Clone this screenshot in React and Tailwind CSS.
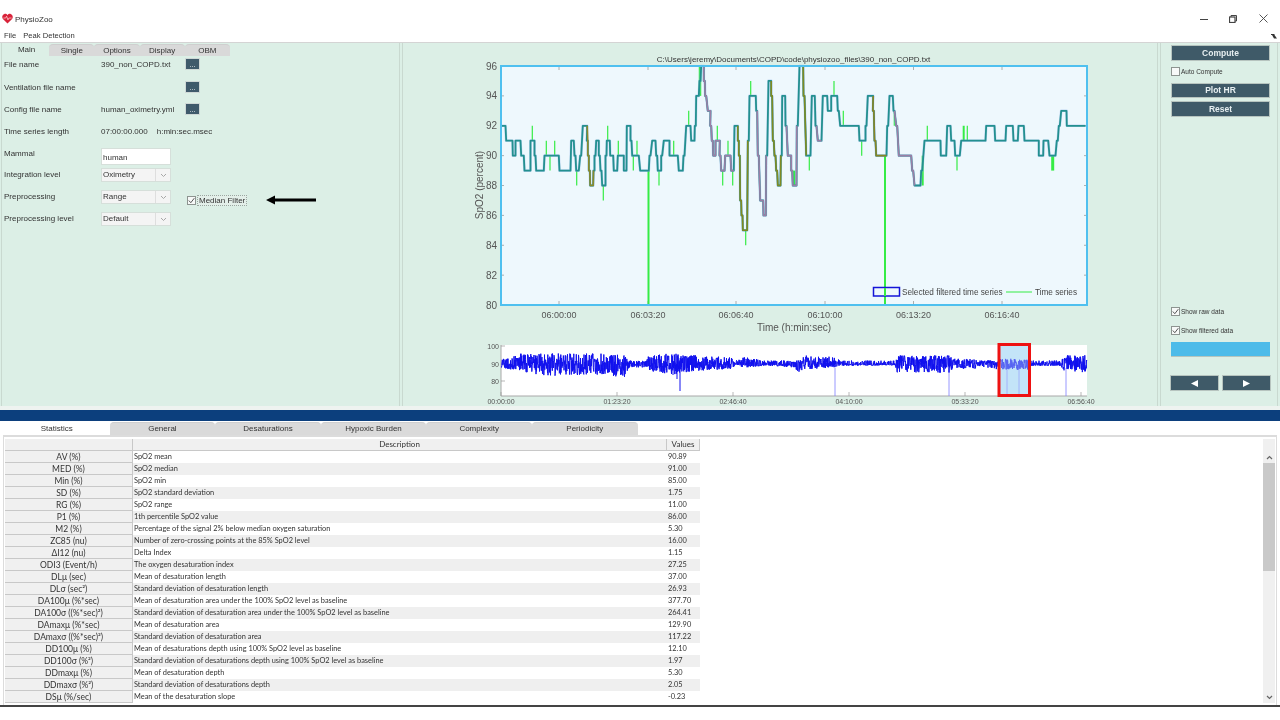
const sans = "font-['Liberation_Sans',Arial,sans-serif]";

const topTabs = ['Main', 'Single', 'Options', 'Display', 'OBM'];
const bottomTabs = ['Statistics', 'General', 'Desaturations', 'Hypoxic Burden', 'Complexity', 'Periodicity'];

const stats = [
  ['AV (%)', 'SpO2 mean', '90.89'],
  ['MED (%)', 'SpO2 median', '91.00'],
  ['Min (%)', 'SpO2 min', '85.00'],
  ['SD (%)', 'SpO2 standard deviation', '1.75'],
  ['RG (%)', 'SpO2 range', '11.00'],
  ['P1 (%)', '1th percentile SpO2 value', '86.00'],
  ['M2 (%)', 'Percentage of the signal 2% below median oxygen saturation', '5.30'],
  ['ZC85 (nu)', 'Number of zero-crossing points at the 85% SpO2 level', '16.00'],
  ['ΔI12 (nu)', 'Delta Index', '1.15'],
  ['ODI3 (Event/h)', 'The oxygen desaturation index', '27.25'],
  ['DLμ (sec)', 'Mean of desaturation length', '37.00'],
  ['DLσ (sec²)', 'Standard deviation of desaturation length', '26.93'],
  ['DA100μ (%*sec)', 'Mean of desaturation area under the 100% SpO2 level as baseline', '377.70'],
  ['DA100σ ((%*sec)²)', 'Standard deviation of desaturation area under the 100% SpO2 level as baseline', '264.41'],
  ['DAmaxμ (%*sec)', 'Mean of desaturation area', '129.90'],
  ['DAmaxσ ((%*sec)²)', 'Standard deviation of desaturation area', '117.22'],
  ['DD100μ (%)', 'Mean of desaturations depth using 100% SpO2 level as baseline', '12.10'],
  ['DD100σ (%²)', 'Standard deviation of desaturations depth using 100% SpO2 level as baseline', '1.97'],
  ['DDmaxμ (%)', 'Mean of desaturation depth', '5.30'],
  ['DDmaxσ (%²)', 'Standard deviation of desaturations depth', '2.05'],
  ['DSμ (%/sec)', 'Mean of the desaturation slope', '-0.23'],
];

// plateaus traced off the plot: [from, to, value], x in crop coordinates
const leftPart = [
  [95, 105, 92], [110, 126, 91], [130, 135, 90], [138, 150, 91], [155, 160, 90], [165, 180, 89], [183, 192, 91],
  [195, 195, 90], [200, 220, 89], [225, 265, 90], [270, 300, 89], [305, 310, 91], [315, 315, 90], [320, 325, 89],
  [332, 332, 90], [340, 350, 92], [352, 352, 91], [355, 355, 90], [358, 358, 89], [362, 368, 88], [372, 372, 89],
  [375, 375, 90], [380, 385, 91], [388, 388, 90], [393, 393, 89], [398, 405, 88], [408, 408, 90], [412, 418, 91],
  [422, 428, 90], [433, 440, 89], [445, 460, 90], [463, 468, 89], [472, 480, 92], [483, 483, 91], [488, 505, 90],
  [512, 535, 89], [540, 540, 90], [548, 555, 91], [560, 560, 90], [565, 572, 89], [575, 575, 90], [583, 597, 91],
  [600, 622, 90], [628, 637, 89], [642, 642, 90], [650, 660, 92], [665, 672, 91], [676, 676, 92], [680, 685, 94],
  [690, 690, 95], [695, 700, 96], [703, 703, 95], [707, 707, 94], [715, 720, 93], [722, 722, 92], [727, 727, 91],
  [731, 735, 90], [738, 748, 91], [750, 750, 90], [755, 762, 89], [767, 780, 90], [785, 790, 89], [795, 802, 92],
  [805, 805, 91], [808, 808, 90], [812, 812, 87], [816, 816, 86], [820, 830, 85], [835, 835, 91], [840, 856, 94],
  [860, 860, 93], [865, 865, 90], [872, 878, 87], [882, 886, 86], [890, 890, 90], [897, 902, 95], [905, 905, 94],
  [910, 910, 91], [915, 915, 90], [920, 920, 89], [925, 930, 88], [934, 934, 90],
];
const rightPart = [
  [8, 14, 94], [18, 18, 92], [25, 32, 90], [35, 35, 89], [40, 48, 88], [52, 52, 92], [60, 68, 96], [72, 72, 94],
  [80, 90, 90], [97, 103, 94], [108, 108, 92], [115, 123, 91], [130, 140, 94], [145, 152, 93], [155, 170, 94],
  [175, 175, 93], [182, 235, 92], [240, 255, 91], [258, 258, 92], [265, 278, 94], [280, 280, 93], [285, 285, 91],
  [290, 318, 90], [323, 323, 92], [330, 337, 94], [342, 342, 93], [350, 350, 92], [358, 392, 90], [398, 398, 89],
  [405, 420, 88], [425, 425, 89], [435, 480, 91], [484, 497, 90], [503, 510, 92], [515, 522, 91], [527, 538, 90],
  [545, 615, 91], [620, 642, 92], [647, 675, 91], [680, 697, 92], [702, 712, 91], [717, 730, 92], [735, 775, 91],
  [778, 788, 90], [792, 803, 91], [810, 825, 90], [832, 832, 91], [838, 838, 92], [845, 858, 93], [862, 915, 92],
];

const valueY = (v) => 66 + (96 - v) * 14.94;

const series = [];
leftPart.forEach(([a, b, v]) => {
  series.push([470 + (a - 1.5) / 3, valueY(v)]);
  series.push([470 + (b + 1.5) / 3, valueY(v)]);
});
rightPart.forEach(([a, b, v]) => {
  series.push([780 + (a - 1.5) / 3, valueY(v)]);
  series.push([780 + (b + 1.5) / 3, valueY(v)]);
});

const toPoints = (pts) => pts.map(([x, y]) => `${x.toFixed(1)},${y.toFixed(1)}`).join(' ');

// stretches where the filtered trace changes tint
const tinted = [
  [587, 594, '#8c8a2c'], [703, 734, '#9a7fa6'], [737, 748, '#7f8a22'], [757, 767, '#9a7fa6'], [769, 781, '#7f8a22'],
  [786, 797, '#9a7fa6'], [800, 810, '#7f8a22'], [816, 822, '#9a7fa6'], [868, 887, '#8a8424'], [894, 920, '#9a7fa6'],
];

// raw series spikes: [x, value from, value to, width]
const spikes = [
  [532.3, 91, 92], [546.3, 90, 91], [550, 90, 89], [554.7, 90, 91], [576.7, 89, 88], [603.3, 88, 87], [607.7, 91, 92],
  [618.3, 90, 91], [633.3, 90, 89], [637, 90, 91], [659, 89, 88], [673.7, 90, 91], [688.7, 92, 93], [700, 96, 94, 2.5],
  [717.3, 91, 92], [722.7, 89, 88], [728, 90, 91], [732.7, 89, 88], [745.7, 85, 84], [750.7, 94, 95],
  [794, 88, 89, 2.5], [809.3, 90, 89], [834, 94, 95], [843.3, 92, 93], [861.7, 91, 90], [894.3, 93, 92],
  [922.7, 88, 90, 2], [927.3, 91, 92], [957, 90, 89], [963.7, 91, 92, 2], [967.3, 91, 92], [1052.7, 90, 89, 3],
];

const plotYTicks = [96, 94, 92, 90, 88, 86, 84, 82, 80];
const plotXTicks = [[559, '06:00:00'], [648, '06:03:20'], [736, '06:06:40'], [825, '06:10:00'], [913.5, '06:13:20'], [1002, '06:16:40']];
const miniXTicks = [[501, '00:00:00'], [617, '01:23:20'], [733, '02:46:40'], [849, '04:10:00'], [965, '05:33:20'], [1081, '06:56:40']];

// envelope of the overview trace: [x, up, down]
const envelope = [
  [501, 3, 2], [520, 6, 4], [547, 6, 7], [600, 6, 6], [625, 5, 8], [630, 2, 2], [645, 2, 2], [650, 6, 4], [672, 6, 6],
  [695, 5, 4], [730, 4, 3], [735, 2, 1], [745, 4, 2], [765, 2, 1], [792, 2, 2], [798, 2, 5], [805, 5, 3], [835, 4, 2],
  [840, 2, 1], [895, 2, 1], [897, 5, 5], [950, 5, 5], [952, 3, 3], [975, 3, 3], [977, 2, 1], [996, 2, 3], [1000, 3, 4],
  [1030, 3, 3], [1032, 2, 1], [1060, 2, 1], [1066, 5, 5], [1087, 5, 5],
];

const miniY = (v) => 364 - (v - 90) * 1.75;

function buildOverview() {
  let seed = 390;
  const rand = () => {
    seed = (seed * 16807) % 2147483647;
    return seed / 2147483647;
  };
  const pts = [];
  let seg = 0;
  for (let x = 501.5; x < 1087; x += 0.25) {
    while (seg < envelope.length - 2 && envelope[seg + 1][0] < x) seg++;
    const [x0, u0, d0] = envelope[seg];
    const [x1, u1, d1] = envelope[seg + 1];
    const t = (x - x0) / (x1 - x0);
    const up = u0 + (u1 - u0) * t;
    const down = d0 + (d1 - d0) * t;
    const r = rand();
    const v = r > 0.5 ? 90 + up * (r - 0.5) * 2 : 90 - down * (0.5 - r) * 2;
    pts.push([x, miniY(v)]);
  }
  return pts;
}

const overview = buildOverview();

function HeartIcon() {
  return (
    <svg width="11" height="11" viewBox="0 0 12 12" className="mb-[1px] shrink-0">
      <path d="M6 11.5 1 6.5C-.4 4.8.2 1.6 2.6 1 4 .7 5.3 1.3 6 2.4 6.7 1.3 8 .7 9.4 1c2.4.6 3 3.8 1.6 5.5Z" fill="#d9233a" />
      <path d="M1.5 5.5h2.5l1-2 1.500 4 1-2h3" fill="none" stroke="#ffd5d5" strokeWidth="0.8" />
    </svg>
  );
}

function WindowButtons() {
  return (
    <div className="mb-[2px] ml-auto flex items-center text-[#333]">
      <svg width="8" height="8" viewBox="0 0 8 8" className="-ml-[1px]"><path d="M0 4.5h8" stroke="#444" strokeWidth="1" /></svg>
      <svg width="8" height="8" viewBox="0 0 8 8" className="ml-[21px]">
        <path d="M2 2V.5h5.5V6H6" fill="none" stroke="#444" strokeWidth="1" />
        <rect x=".5" y="2" width="5.5" height="5.5" fill="none" stroke="#444" strokeWidth="1.2" />
      </svg>
      <svg width="9" height="9" viewBox="0 0 9 9" className="ml-[22px] mr-[12px]"><path d="M.5.5l8 8M8.5.5l-8 8" stroke="#444" strokeWidth="0.9" /></svg>
    </div>
  );
}

function DotsButton() {
  return (
    <button className="ml-[84px] mt-[2px] flex h-[12px] w-[15px] shrink-0 items-end justify-center border border-[#cfd8d6] bg-[#3f5a6b] pb-[1px] text-[7px] leading-[7px] text-white">
      ...
    </button>
  );
}

function Chevron() {
  return (
    <svg width="7" height="5" viewBox="0 0 7 5"><path d="M1 1l2.5 2.5L6 1" fill="none" stroke="#a8a8a8" strokeWidth="1" /></svg>
  );
}

function Dropdown({ value }) {
  return (
    <div className="mt-[2px] flex h-[14px] w-[70px] shrink-0 items-center border border-[#d6dfda] bg-[#f4f4f4] pl-[1px]">
      <span>{value}</span>
      <span className="ml-auto flex h-full w-[15px] items-center justify-center border-l border-[#dedede]">
        <Chevron />
      </span>
    </div>
  );
}

function Check({ checked }) {
  return (
    <span className="flex h-[9px] w-[9px] shrink-0 items-center justify-center border border-[#8d9490] bg-[#f7f9f8]">
      {checked && (
        <svg width="7" height="7" viewBox="0 0 7 7"><path d="M.8 3.5 2.8 5.7 6.3 1.2" fill="none" stroke="#444" strokeWidth="0.9" /></svg>
      )}
    </span>
  );
}

function FormRow({ label, children, className = '' }) {
  return (
    <div className={`flex ${className}`}>
      <span className="h-[15px] w-[99px] shrink-0 whitespace-nowrap pl-[2px] leading-[18px]">{label}</span>
      {children}
    </div>
  );
}

function DarkButton({ children, className = '' }) {
  return (
    <button className={`flex w-[99px] items-center justify-center border border-[#b7c4bf] bg-[#3f5a68] text-[8.5px] font-bold text-[#e6eef0] ${className}`}>
      {children}
    </button>
  );
}

function LeftPanel() {
  return (
    <div className="ml-[1px] h-full w-[399px] border-x border-[#c9d9d0] text-[8px] text-[#333]">
      <div className="flex h-[13px] items-end pl-[2px]">
        {topTabs.map((t, i) => (
          <div
            key={t}
            className={`flex h-[12px] w-[45.2px] items-center justify-center rounded-t-[4px] ${i === 0 ? 'bg-[#dcefe6]' : 'border-t border-[#cfcfcf] bg-[#d9d9d9]'}`}
          >
            {t}
          </div>
        ))}
      </div>
      <FormRow label="File name" className="h-[14px]">
        <span className="w-[0px] whitespace-nowrap leading-[18px]">390_non_COPD.txt</span>
        <DotsButton />
      </FormRow>
      <FormRow label="Ventilation file name" className="mt-[9px] h-[14px]">
        <span className="w-[0px]" />
        <DotsButton />
      </FormRow>
      <FormRow label="Config file name" className="mt-[8px] h-[14px]">
        <span className="w-[0px] whitespace-nowrap leading-[18px]">human_oximetry.yml</span>
        <DotsButton />
      </FormRow>
      <FormRow label="Time series length" className="mt-[8px] h-[14px]">
        <span className="whitespace-nowrap leading-[18px]">07:00:00.000</span>
        <span className="ml-[9px] whitespace-nowrap leading-[18px]">h:min:sec.msec</span>
      </FormRow>
      <FormRow label="Mammal" className="mt-[8px] h-[21px]">
        <div className="mt-[3px] flex h-[17px] w-[70px] items-center border border-[#d6dfda] bg-white pl-[1px] pt-[2px]">human</div>
      </FormRow>
      <FormRow label="Integration level" className="h-[22px]">
        <Dropdown value="Oximetry" />
      </FormRow>
      <FormRow label="Preprocessing" className="h-[22px]">
        <Dropdown value="Range" />
        <div className="ml-[16px] mt-[7px] flex h-[10px] items-center">
          <Check checked />
          <span className="ml-[1px] border border-dotted border-[#9aa7a0] bg-[#e3efe9] px-[1px] leading-[9px]">Median Filter</span>
          <svg width="50" height="10" viewBox="0 0 50 10" className="ml-[19px]">
            <path d="M0 5 9 .5V3.5H50V6.5H9V9.5Z" fill="#000" />
          </svg>
        </div>
      </FormRow>
      <FormRow label="Preprocessing level" className="h-[22px]">
        <Dropdown value="Default" />
      </FormRow>
    </div>
  );
}

function MainPlot() {
  return (
    <svg width="754" height="273" viewBox="403 65 754 273" className={`block overflow-visible ${sans}`}>
      <rect x="501" y="66" width="586" height="239" fill="#eef8fd" />
      {plotYTicks.map((v) => (
        <g key={v}>
          <path d={`M501 ${valueY(v)}h3M1087 ${valueY(v)}h-3`} stroke="#999" strokeWidth="0.8" />
          <text x="497" y={valueY(v) + 3.5} textAnchor="end" fontSize="10" fill="#555">{v}</text>
        </g>
      ))}
      {plotXTicks.map(([x, label]) => (
        <g key={label}>
          <path d={`M${x} 66v4M${x} 305v-4`} stroke="#999" strokeWidth="0.8" />
          <text x={x} y="318" textAnchor="middle" fontSize="9" fill="#555">{label}</text>
        </g>
      ))}
      <text transform="translate(483 185) rotate(-90)" textAnchor="middle" fontSize="10" fill="#555">SpO2 (percent)</text>
      <text x="794" y="331" textAnchor="middle" fontSize="10" fill="#555">Time (h:min:sec)</text>

      <path d="M648.5 171V305" stroke="#35ec45" strokeWidth="2" />
      <path d="M885 156V305" stroke="#35ec45" strokeWidth="2" />
      {spikes.map(([x, a, b, w], i) => (
        <path key={i} d={`M${x} ${valueY(a)}V${valueY(b)}`} stroke="#35ec45" strokeWidth={w || 1.2} />
      ))}
      <polyline points={toPoints(series)} fill="none" stroke="#8fb6ea" strokeWidth="2.6" strokeOpacity="0.5" strokeLinejoin="round" />
      <polyline points={toPoints(series)} fill="none" stroke="#23908f" strokeWidth="1.8" strokeLinejoin="round" />
      {tinted.map(([a, b, color]) => (
        <polyline key={a} points={toPoints(series.filter(([x]) => x >= a && x <= b))} fill="none" stroke={color} strokeWidth="1.6" strokeLinejoin="round" />
      ))}
      <rect x="501" y="66" width="586" height="239" fill="none" stroke="#4fc0ef" strokeWidth="2" />

      <rect x="873.5" y="287.5" width="26" height="8.5" fill="#eef8fd" stroke="#1414d8" strokeWidth="1.5" />
      <path d="M885 288v8" stroke="#35ec45" strokeWidth="2" />
      <text x="902" y="295" fontSize="8.2" fill="#444">Selected filtered time series</text>
      <path d="M1006 292h26" stroke="#35ec45" strokeWidth="1" />
      <text x="1035" y="295" fontSize="8.2" fill="#444">Time series</text>
    </svg>
  );
}

function OverviewPlot() {
  return (
    <svg width="754" height="68" viewBox="403 338 754 68" className={`block overflow-visible ${sans}`}>
      <rect x="501" y="345" width="586" height="51" fill="#fff" />
      <rect x="998" y="345" width="32" height="51" fill="#c4e4f8" />
      <path d="M501 345V396H1087" fill="none" stroke="#a8a8a8" strokeWidth="1" />
      {[[100, 346], [90, 364], [80, 381]].map(([v, y]) => (
        <g key={v}>
          <path d={`M501 ${y}h4`} stroke="#999" strokeWidth="0.7" />
          <text x="499" y={y + 2.5} textAnchor="end" fontSize="7" fill="#555">{v}</text>
        </g>
      ))}
      {miniXTicks.map(([x, label]) => (
        <g key={label}>
          <path d={`M${x} 396v-4`} stroke="#999" strokeWidth="0.7" />
          <text x={x} y="404" textAnchor="middle" fontSize="7" fill="#555">{label}</text>
        </g>
      ))}
      {[835, 949, 1007, 1019, 1066].map((x) => (
        <path key={x} d={`M${x} 368V396`} stroke="#7f7fff" strokeWidth="0.8" />
      ))}
      <polyline points={toPoints(overview)} fill="none" stroke="#1010ee" strokeWidth="1" />
      <path d="M680 364V391M677 364V379M673 362V375" stroke="#1010ee" strokeWidth="1" />
      <rect x="998" y="345" width="32" height="51" fill="#c4e4f8" fillOpacity="0.4" />
      <rect x="999" y="344.5" width="30.5" height="51" fill="none" stroke="#ee1111" strokeWidth="3" />
    </svg>
  );
}

function CenterPanel() {
  return (
    <div className="ml-[2px] h-full w-[756px] border-x border-[#c9d9d0] pt-[12px]">
      <div className="h-[10px] whitespace-nowrap pl-[27px] text-center text-[8px] leading-[10px] text-[#333]">
        C:\Users\jeremy\Documents\COPD\code\physiozoo_files\390_non_COPD.txt
      </div>
      <MainPlot />
      <OverviewPlot />
    </div>
  );
}

function RightPanel() {
  return (
    <div className="ml-[2px] h-full w-[118px] border-x border-[#c9d9d0] pl-[10px] pt-[2px] text-[#333]">
      <DarkButton className="h-[16px]">Compute</DarkButton>
      <label className="mt-[6px] flex h-[9px] items-center text-[6.5px]">
        <Check />
        <span className="ml-[1px]">Auto Compute</span>
      </label>
      <DarkButton className="mt-[7px] h-[15px]">Plot HR</DarkButton>
      <DarkButton className="mt-[3px] h-[16px]">Reset</DarkButton>
      <label className="mt-[190px] flex h-[9px] items-center text-[6.5px]">
        <Check checked />
        <span className="ml-[1px]">Show raw data</span>
      </label>
      <label className="mt-[10px] flex h-[9px] items-center text-[6.5px]">
        <Check checked />
        <span className="ml-[1px]">Show filtered data</span>
      </label>
      <div className="mt-[7px] h-[15px] w-[99px] border-b border-[#b5c5be] bg-[#4dbbe9]" />
      <div className="-ml-[1px] mt-[18px] flex gap-[3px]">
        <button className="flex h-[16px] w-[49px] items-center justify-center border border-[#b7c4bf] bg-[#3f5a68]">
          <svg width="7" height="7" viewBox="0 0 7 7"><path d="M7 0v7L0 3.5Z" fill="#fff" /></svg>
        </button>
        <button className="flex h-[16px] w-[49px] items-center justify-center border border-[#b7c4bf] bg-[#3f5a68]">
          <svg width="7" height="7" viewBox="0 0 7 7"><path d="M0 0v7l7-3.5Z" fill="#fff" /></svg>
        </button>
      </div>
    </div>
  );
}

function StatsTable() {
  return (
    <div className="w-[695px] font-['Lato',sans-serif] text-[7.4px] text-[#333]">
      <div className="flex h-[12px] bg-[#f0f0f0]">
        <div className="w-[128px] border-b border-r border-[#c8c8c8]" />
        <div className="w-[534px] border-b border-r border-[#c8c8c8] text-center text-[8px] leading-[11px]">Description</div>
        <div className="w-[33px] border-b border-r border-[#c8c8c8] text-center text-[8px] leading-[11px]">Values</div>
      </div>
      {stats.map(([name, desc, value], i) => (
        <div key={name} className={`flex h-[12px] leading-[11px] ${i % 2 === 0 ? 'bg-white' : 'bg-[#efefef]'}`}>
          <div className="w-[128px] border-b border-r border-[#c8c8c8] bg-[#f0f0f0] text-center text-[8.5px] leading-[12px]">{name}</div>
          <div className="w-[534px] whitespace-nowrap pl-[1px]">{desc}</div>
          <div className="w-[33px] pl-[1px]">{value}</div>
        </div>
      ))}
    </div>
  );
}

function Scrollbar() {
  return (
    <div className="flex h-[264px] w-[12px] flex-col bg-[#f0f0f0]">
      <div className="flex h-[24px] items-end justify-center pb-[3px]">
        <svg width="7" height="5" viewBox="0 0 7 5"><path d="M1 4l2.5-2.5L6 4" fill="none" stroke="#666" strokeWidth="1.2" /></svg>
      </div>
      <div className="h-[108px] bg-[#c9c9c9]" />
      <div className="mt-auto flex h-[12px] items-center justify-center">
        <svg width="7" height="5" viewBox="0 0 7 5"><path d="M1 1l2.5 2.5L6 1" fill="none" stroke="#666" strokeWidth="1.2" /></svg>
      </div>
    </div>
  );
}

export default function App() {
  return (
    <div className={`h-[720px] w-[1280px] overflow-hidden bg-white blur-[0.4px] ${sans}`}>
      <div className="flex h-[28px] items-end pb-[3px] pl-[2px] text-[8px] text-[#333]">
        <HeartIcon />
        <span className="ml-[2px] leading-[10px]">PhysioZoo</span>
        <WindowButtons />
      </div>
      <div className="flex h-[15px] items-center border-b border-[#d4d4d4] pl-[4px] pt-[2px] text-[7.6px] text-[#333]">
        <span>File</span>
        <span className="ml-[7px]">Peak Detection</span>
        <svg width="6" height="6" viewBox="0 0 6 6" className="ml-auto mr-[3px]"><path d="M0 1h3.5v1L6 5.5H3L1 2H0Z" fill="#333" /></svg>
      </div>
      <div className="flex h-[363px] w-full bg-[#dcefe6]">
        <LeftPanel />
        <CenterPanel />
        <RightPanel />
      </div>
      <div className="h-[4px] bg-[#eef3f0]" />
      <div className="h-[11px] bg-[#0c3f7d]" />
      <div className="flex h-[14px] items-end pl-[4px] text-[8px] text-[#333]">
        {bottomTabs.map((t, i) => (
          <div
            key={t}
            className={`flex h-[13px] w-[105.6px] items-center justify-center rounded-t-[4px] ${i === 0 ? 'bg-white' : 'border-t border-[#cfcfcf] bg-[#dadada]'}`}
          >
            {t}
          </div>
        ))}
      </div>
      <div className="mx-[3px] flex h-[270px] border-x border-t-2 border-[#dcdcdc] pl-[1px] pt-[2px]">
        <StatsTable />
        <div className="ml-auto mr-[1px]">
          <Scrollbar />
        </div>
      </div>
      <div className="h-[2px] bg-[#444]" />
    </div>
  );
}
